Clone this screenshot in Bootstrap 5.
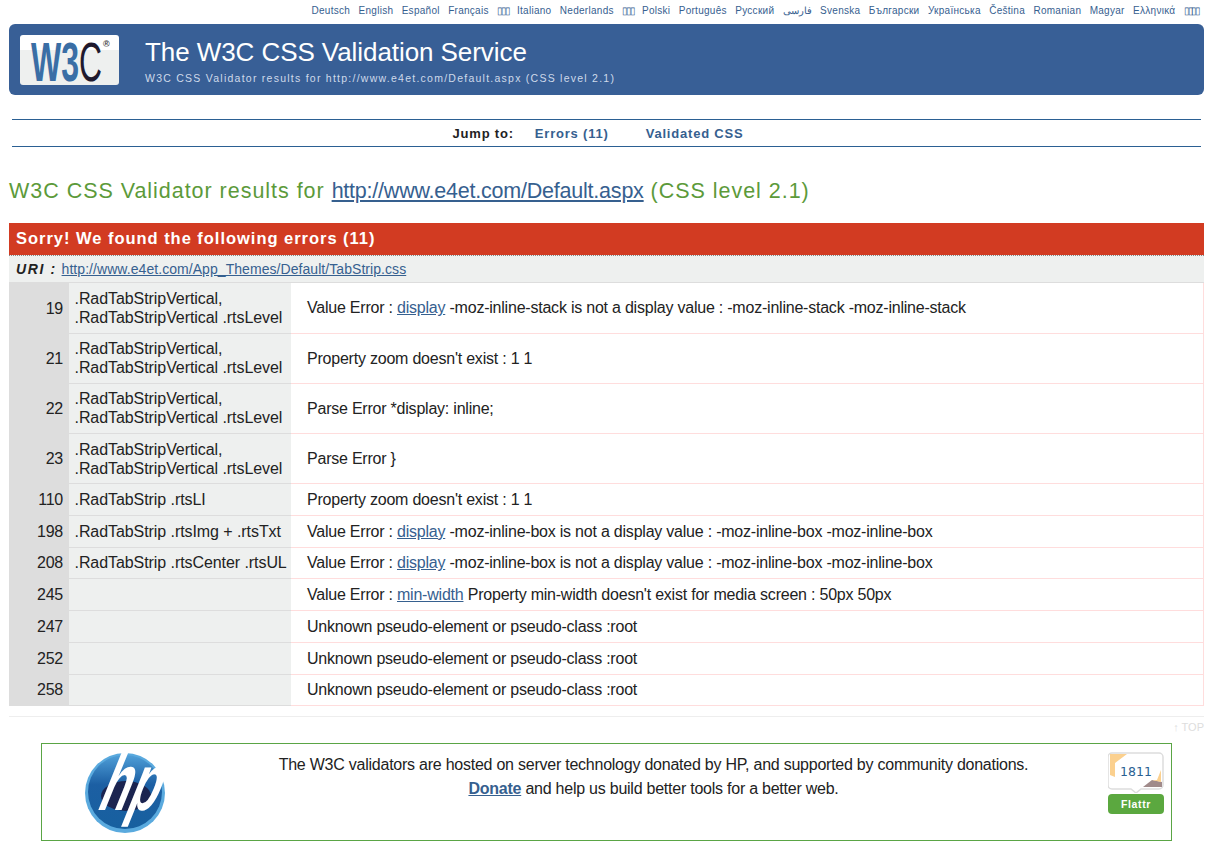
<!DOCTYPE html>
<html lang="en">
<head>
<meta charset="utf-8">
<title>W3C CSS Validator results</title>
<link href="https://cdn.jsdelivr.net/npm/bootstrap@5.3.0/dist/css/bootstrap.min.css" rel="stylesheet">
<style>
html,body{height:850px;overflow:hidden}
body{font-family:"Liberation Sans",Arial,sans-serif;color:#222;background:#fff;padding:0 11px 0 9px}
a{color:#36608f}
.langbar{height:24px;font-size:10px;line-height:1;gap:8.4px;padding:6px 5px 0 0;letter-spacing:.28px}
.langbar a{color:#36608f;text-decoration:none;white-space:nowrap}
.langbar a.tofu{letter-spacing:-2.2px}
.banner{height:71px;background:#385f96;border-radius:6px;color:#fff;padding:11px 0 0 11px}
.logo-w3c{width:99px;height:50px;background:linear-gradient(#fff 30%,#eef0ef 30%);border-radius:3px;flex:none;overflow:visible}
.banner-text{margin-left:26px}
.banner-title{font-size:26px;line-height:30px;font-weight:400;margin:2px 0 0;letter-spacing:-.07px}
.banner-sub{font-size:10.5px;letter-spacing:1.25px;line-height:12px;margin:5px 0 0;color:#cfdaea}
.jumpbar{margin:24px 3px 0;height:28px;border-top:1px solid #2b6093;border-bottom:1px solid #2b6093;font-size:13px;font-weight:700;letter-spacing:.8px;gap:21px;padding:1px 17px 0 0}
.jumpbar a{color:#36608f;text-decoration:none}
.jumpbar a+a{margin-left:16px}
.jumpbar span{color:#222}
.results-title{font-size:21.5px;font-weight:400;line-height:26px;margin:31px 0 0;color:#5c9a3a;letter-spacing:.97px}
.results-title a{color:#36608f;letter-spacing:-.22px}
.err-head{margin:19px 0 0;height:32px;background:#d23b22;color:#fff;font-size:16.5px;font-weight:700;line-height:31px;padding-left:7px;letter-spacing:.97px}
.uri-row{height:28px;background:#eef0ef;font-size:14px;line-height:27px;padding-left:7px;border-top:1px dotted #888;border-bottom:1px solid #ddd}
.uri-row b{font-style:italic;letter-spacing:1.6px;margin-right:1px}
.uri-row a{letter-spacing:.06px}
.err-table{width:100%;table-layout:fixed;border-collapse:collapse;margin:0;font-size:16px;border-right:1px solid #fdd;letter-spacing:-.22px}
.err-table td{padding:0;vertical-align:middle;line-height:19px}
.err-table .c-line{width:60px;background:#ddd;text-align:right;padding-right:6px;border-bottom:0}
.err-table .c-sel{width:222px;background:#eef0ef;padding-left:5.500px;border-bottom:1px solid #ddd;white-space:nowrap;letter-spacing:-.07px}
.err-table .c-msg{padding-left:16px;border-bottom:1px solid #fdd}
.r2{height:50px}.r2b{height:50.5px}.r1{height:31.75px}
.toprule{margin:10px 0 0;border-top:1px solid #eee;height:17px;text-align:right;font-size:11px;line-height:20px;color:#ddd}
.sponsor{margin:10px 32px 0;height:98px;border:1px solid #5aa545;font-size:16px;line-height:24px;position:relative}
.sponsor-text{width:1041px;text-align:center;padding:9px 0 0 182px;color:#222;letter-spacing:-.24px}
.sponsor-text a{font-weight:700}
.hp-logo{position:absolute;left:42px;top:8px;overflow:visible}
.flattr{position:absolute;left:1066px;top:8px;width:56px}
.flattr-btn{background:#5ba83f;color:#fff;height:20px;border-radius:4px;text-align:center;font-size:10.5px;font-weight:700;line-height:20px;letter-spacing:.6px;margin-top:1px}
</style>
</head>
<body>
<nav class="langbar d-flex justify-content-end">
<a href="#">Deutsch</a><a href="#">English</a><a href="#">Español</a><a href="#">Français</a><a class="tofu" href="#">▯▯▯</a><a href="#">Italiano</a><a href="#">Nederlands</a><a class="tofu" href="#">▯▯▯</a><a href="#">Polski</a><a href="#">Português</a><a href="#">Русский</a><a href="#">فارسی</a><a href="#">Svenska</a><a href="#">Български</a><a href="#">Українська</a><a href="#">Čeština</a><a href="#">Romanian</a><a href="#">Magyar</a><a href="#">Ελληνικά</a><a class="tofu" href="#">▯▯▯▯</a>
</nav>
<header class="banner d-flex align-items-start">
<svg class="logo-w3c" viewBox="0 0 99 50" role="img" aria-label="W3C">
<text x="11" y="46" font-family="Liberation Sans" font-weight="700" font-size="55" textLength="48" lengthAdjust="spacingAndGlyphs" fill="#3a6ea5">W3</text>
<text x="59" y="46" font-family="Liberation Sans" font-size="55" textLength="23" lengthAdjust="spacingAndGlyphs" fill="#1f1a2e">C</text>
<text x="83" y="12" font-family="Liberation Sans" font-weight="700" font-size="9" fill="#444">®</text>
</svg>
<div class="banner-text">
<h1 class="banner-title">The W3C CSS Validation Service</h1>
<p class="banner-sub">W3C CSS Validator results for http://www.e4et.com/Default.aspx (CSS level 2.1)</p>
</div>
</header>
<nav class="jumpbar d-flex justify-content-center align-items-center">
<span>Jump to:</span>
<a href="#">Errors (11)</a>
<a href="#">Validated CSS</a>
</nav>
<h2 class="results-title">W3C CSS Validator results for <a href="#">http://www.e4et.com/Default.aspx</a> (CSS level 2.1)</h2>
<h3 class="err-head">Sorry! We found the following errors (11)</h3>
<div class="uri-row"><b>URI :</b> <a href="#">http://www.e4et.com/App_Themes/Default/TabStrip.css</a></div>
<table class="err-table">
<tr class="r2"><td class="c-line">19</td><td class="c-sel">.RadTabStripVertical,<br>.RadTabStripVertical .rtsLevel</td><td class="c-msg">Value Error : <a href="#">display</a> -moz-inline-stack is not a display value : -moz-inline-stack -moz-inline-stack</td></tr>
<tr class="r2"><td class="c-line">21</td><td class="c-sel">.RadTabStripVertical,<br>.RadTabStripVertical .rtsLevel</td><td class="c-msg">Property zoom doesn't exist : 1 1</td></tr>
<tr class="r2b"><td class="c-line">22</td><td class="c-sel">.RadTabStripVertical,<br>.RadTabStripVertical .rtsLevel</td><td class="c-msg">Parse Error *display: inline;</td></tr>
<tr class="r2"><td class="c-line">23</td><td class="c-sel">.RadTabStripVertical,<br>.RadTabStripVertical .rtsLevel</td><td class="c-msg">Parse Error }</td></tr>
<tr class="r1"><td class="c-line">110</td><td class="c-sel">.RadTabStrip .rtsLI</td><td class="c-msg">Property zoom doesn't exist : 1 1</td></tr>
<tr class="r1"><td class="c-line">198</td><td class="c-sel">.RadTabStrip .rtsImg + .rtsTxt</td><td class="c-msg">Value Error : <a href="#">display</a> -moz-inline-box is not a display value : -moz-inline-box -moz-inline-box</td></tr>
<tr class="r1"><td class="c-line">208</td><td class="c-sel">.RadTabStrip .rtsCenter .rtsUL</td><td class="c-msg">Value Error : <a href="#">display</a> -moz-inline-box is not a display value : -moz-inline-box -moz-inline-box</td></tr>
<tr class="r1"><td class="c-line">245</td><td class="c-sel"></td><td class="c-msg">Value Error : <a href="#">min-width</a> Property min-width doesn't exist for media screen : 50px 50px</td></tr>
<tr class="r1"><td class="c-line">247</td><td class="c-sel"></td><td class="c-msg">Unknown pseudo-element or pseudo-class :root</td></tr>
<tr class="r1"><td class="c-line">252</td><td class="c-sel"></td><td class="c-msg">Unknown pseudo-element or pseudo-class :root</td></tr>
<tr class="r1"><td class="c-line">258</td><td class="c-sel"></td><td class="c-msg">Unknown pseudo-element or pseudo-class :root</td></tr>
</table>
<div class="toprule">↑ TOP</div>
<section class="sponsor">
<svg class="hp-logo" width="82" height="82" viewBox="0 0 82 82" role="img" aria-label="HP">
<defs><linearGradient id="hpg" x1="0" y1="0" x2="0" y2="1"><stop offset="0" stop-color="#4f9fd8"/><stop offset=".4" stop-color="#1c5fa3"/><stop offset="1" stop-color="#17609f"/></linearGradient></defs>
<circle cx="41" cy="41" r="40" fill="#5aaade"/>
<circle cx="41" cy="40" r="37" fill="url(#hpg)"/>
<ellipse cx="42" cy="44" rx="25" ry="15" fill="#1b2450"/>
<text transform="translate(11 58) skewX(-22) scale(.78 1.3)" font-family="Liberation Sans" font-weight="700" font-size="62" fill="#fff">hp</text>
</svg>
<div class="sponsor-text">The W3C validators are hosted on server technology donated by HP, and supported by community donations.<br><a href="#">Donate</a> and help us build better tools for a better web.</div>
<div class="flattr">
<svg width="56" height="41" viewBox="0 0 56 41" role="img" aria-label="1811" class="d-block">
<path d="M4 1H51a4 4 0 0 1 4 4V33a4 4 0 0 1-4 4H33l-5 4-5-4H4a4 4 0 0 1-4-4V5a4 4 0 0 1 4-4Z" fill="#fff" stroke="#ddd" stroke-width="1.500"/>
<path d="M2 2h17l-12 9v14l-5-2Z" fill="#fbd08e"/><path d="M35 35h19v-5l-10-2Z" fill="#a08a8a"/><path d="M44 28h5l4-10v12Z" fill="#fbd08e"/>
<text x="28" y="24" text-anchor="middle" font-family="DejaVu Sans" font-size="12.500" fill="#2a5f93">1811</text>
</svg>
<div class="flattr-btn">Flattr</div>
</div>
</section>
<script src="https://cdn.jsdelivr.net/npm/bootstrap@5.3.0/dist/js/bootstrap.bundle.min.js"></script>
</body>
</html>
